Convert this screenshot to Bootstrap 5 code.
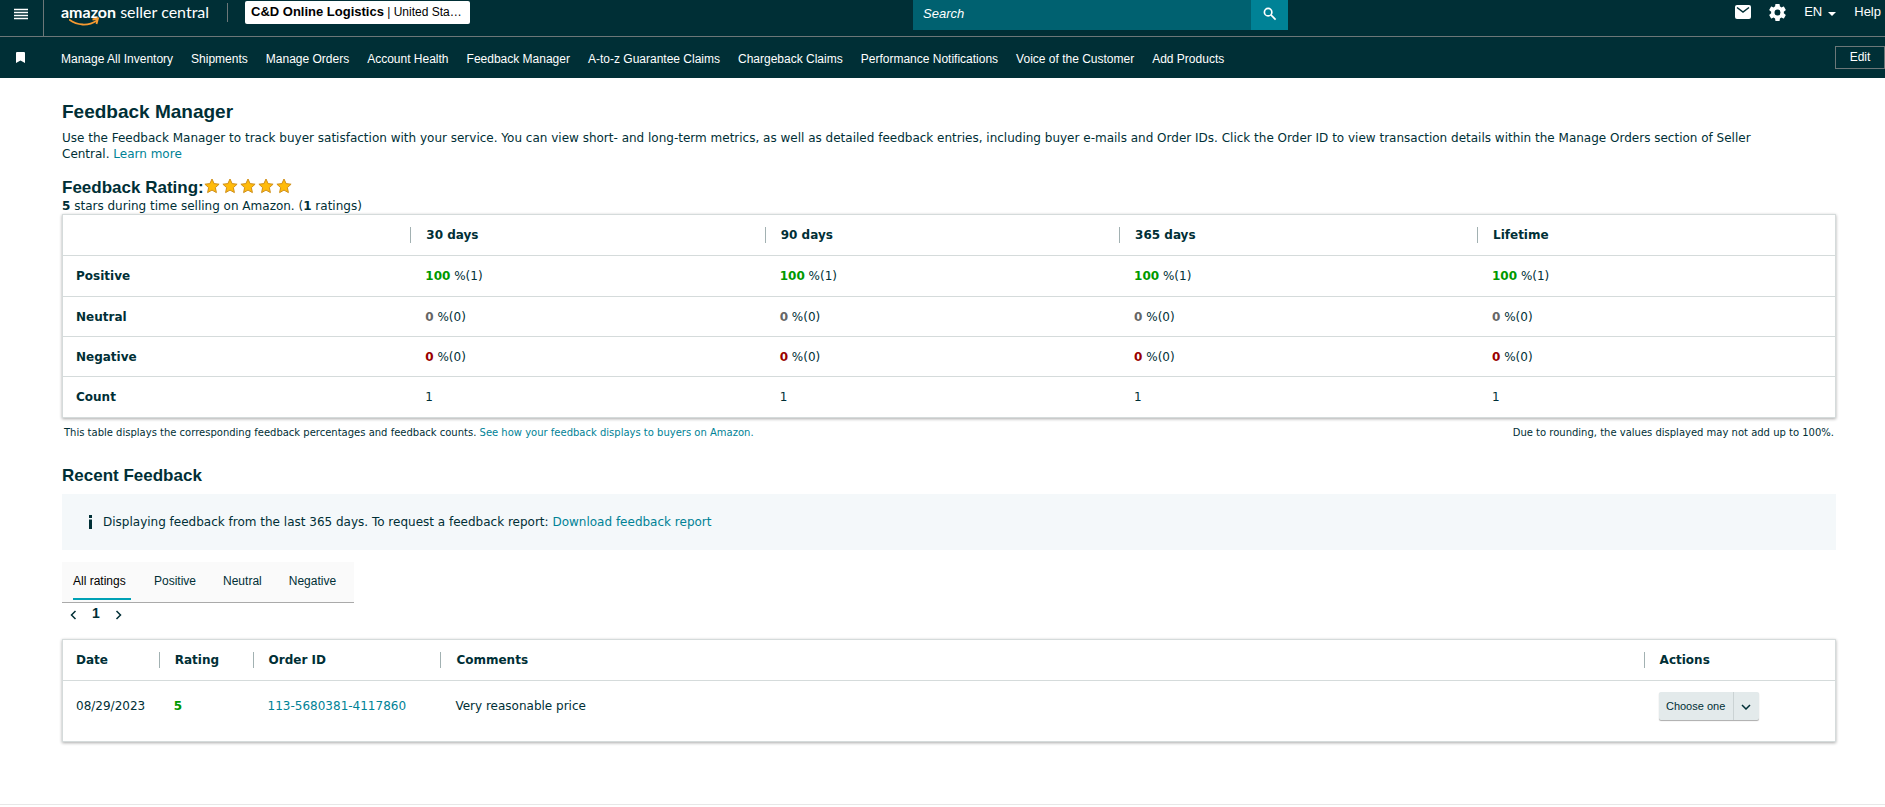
<!DOCTYPE html>
<html lang="en">
<head>
<meta charset="utf-8">
<meta name="viewport" content="width=device-width, initial-scale=1">
<title>Feedback Manager</title>
<link rel="stylesheet" href="https://cdn.jsdelivr.net/npm/bootstrap@5.3.0/dist/css/bootstrap.min.css">
<style>
:root { --ink: #002f36; --teal: #008296; --line: #d5dbdb; --bar-line: #6c7778; }
body { font: 12px/16px "DejaVu Sans", Verdana, sans-serif; color: var(--ink); background: #fff; }
a { color: var(--teal); text-decoration: none; }
a:hover { text-decoration: underline; }
.ui { font-family: "Liberation Sans", Arial, sans-serif; }
.site-head { background: var(--ink); color: #fff; }
.site-head a { color: #fff; }
.top-bar { height: 37px; border-bottom: 1px solid var(--bar-line); }
.menu-cell { width: 44px; height: 36px; padding: 0 8px 10px 6px; border: 0; border-right: 1px solid var(--bar-line); background: none; }
.top-items { height: 28px; }
.brand { position: relative; width: 149px; margin-left: 17px; font: 16px/20px Lato, "Liberation Sans", sans-serif; white-space: nowrap; }
.brand-smile { position: absolute; left: 8px; top: 15px; }
.divider { width: 1px; height: 19px; margin: 0 17px; background: var(--bar-line); }
.picker { width: 225px; height: 23px; padding: 0 6px; border: 0; border-radius: 2px; background: #fff; color: #000; font-size: 12px; text-align: left; }
.picker b { font-size: 13px; }
.finder { width: 375px; height: 30px; }
.finder input { min-width: 0; padding: 0 10px 3px; border: 0; background: #006170; color: #fff; font: italic 13px/16px "Liberation Sans", Arial, sans-serif; }
.finder input::placeholder { color: #fff; opacity: 1; }
.finder button { width: 37px; padding: 0 0 4px; border: 0; background: #008296; }
.tools { gap: 18px; font-size: 13px; padding-right: 4px; }
.caret-gap { gap: 6px; }
.link-bar { height: 41px; font-size: 12px; }
.mark-cell { width: 44px; }
.links { gap: 18px; padding: 2px 0 0 17px; }
.edit-btn { width: 50px; height: 23px; padding: 0 0 2px; border: 1px solid var(--bar-line); background: none; color: #fff; font-size: 12px; }
.page { padding: 22px 49px 62px 62px; border-bottom: 1px solid #e7e7e7; }
h1, h2 { margin: 0; font-weight: 700; font-size: 17px; line-height: 20px; }
h1 { font-size: 19px; line-height: 24px; margin-bottom: 6px; }
.intro { padding-right: 48px; }
.stars { gap: 2px; padding-bottom: 4px; }
.grid { margin: 0; border: 1px solid var(--line); box-shadow: 0 1px 3px #00000055; table-layout: fixed; width: 100%; border-collapse: separate; border-spacing: 0; }
.grid th, .grid td { padding: 0 15px; height: 40px; border-bottom: 1px solid var(--line); vertical-align: middle; }
.grid th:first-child, .grid td:first-child { padding: 0 13px; }
.grid tbody tr:last-child > * { border-bottom: 0; }
.grid thead th + th { padding-left: 0; }
.grid thead th + th span { display: block; border-left: 1px solid #a2b1b2; padding-left: 15px; }
.grid .tall > * { height: 41px; }
.good { color: #090; } .flat { color: #666; } .bad { color: #900; }
.notes { padding: 9px 2px 3px; font-size: 10px; line-height: 12px; }
.info { height: 56px; padding: 0 26px; background: #f4f8fa; margin: 8px 0 12px; gap: 11px; }
.tabs { width: 292px; height: 41px; padding: 0 11px; background: #fafafa; border-bottom: 1px solid #aaa; gap: 27px; font-size: 12px; }
.tabs button { height: 38px; padding: 2px 0 0; border: 0; border-bottom: 2px solid transparent; background: none; color: var(--ink); }
.tabs button.on { width: 58px; margin-right: -4px; border-color: #00a1b5; color: #000; text-align: left; }
.pager { height: 20px; padding-left: 8px; gap: 15px; font-size: 14px; font-weight: 700; margin-bottom: 16px; }
.pager button { padding: 3px 0 0; border: 0; background: none; }
.grid.entries tbody td { height: 60px; padding-bottom: 10px; }
.split { width: 100px; height: 28px; background: #e3eaeb; border-radius: 2px; box-shadow: 0 1px 1px #00000055; }
.split button { border: 0; background: none; padding: 0; font-size: 11px; color: var(--ink); }
.split .drop { width: 26px; border-left: 1px solid #cbd3d4; }
</style>
</head>
<body>
<header class="site-head ui">
  <div class="top-bar d-flex">
    <button class="menu-cell flex-shrink-0" aria-label="Menu"><svg width="14" height="12" viewBox="0 0 14 12" fill="none" stroke="#fff" stroke-width="1.300"><path d="M0 1.500h14M0 4.500h14M0 7.500h14M0 10.500h14"/></svg></button>
    <div class="top-items d-flex flex-grow-1 justify-content-between">
      <div class="d-flex align-items-center pb-1">
        <a class="brand" href="#"><b>amazon</b> seller central
          <svg class="brand-smile" width="32" height="10" viewBox="0 0 32 10" fill="none" stroke="#f79a31" stroke-width="1.800"><path d="M0 2.500c8 6 19 7 28 1M23.500 2.500l5.500-1-1.500 5.500" /></svg></a>
        <span class="divider"></span>
        <button class="picker text-truncate"><b>C&amp;D Online Logistics</b> | United Sta…</button>
      </div>
      <form class="finder d-flex me-1">
        <input class="flex-grow-1" type="text" placeholder="Search" aria-label="Search">
        <button type="button" aria-label="Search"><svg width="14" height="14" viewBox="0 0 15 15" fill="none" stroke="#fff" stroke-width="1.800"><circle cx="5.500" cy="5.500" r="4"/><path d="M8.500 8.500l5 5"/></svg></button>
      </form>
      <div class="tools d-flex align-items-center pb-1">
        <a href="#" class="d-flex" aria-label="Mail"><svg width="16" height="14" viewBox="0 0 16 14"><rect width="16" height="14" rx="2" fill="#fff"/><path d="M2 2.500l6 4.500 6-4.500" fill="none" stroke="#002f36" stroke-width="1.500"/></svg></a>
        <a href="#" class="d-flex" aria-label="Settings"><svg width="17" height="17" viewBox="2 2 20 20" fill="#fff"><path d="M19.430 12.980c.04-.32.070-.64.070-.98s-.03-.66-.07-.98l2.110-1.650c.19-.15.240-.42.120-.64l-2-3.460c-.12-.22-.39-.3-.61-.22l-2.490 1c-.52-.4-1.080-.73-1.690-.98l-.38-2.650A.49.49 0 0 0 14 2h-4c-.25 0-.46.18-.49.420l-.38 2.650c-.61.250-1.170.59-1.690.98l-2.490-1c-.23-.09-.49 0-.61.220l-2 3.460c-.13.220-.07.490.12.640l2.110 1.650c-.04.320-.07.650-.07.980s.03.660.070.980l-2.110 1.650c-.19.150-.24.420-.12.640l2 3.460c.12.220.39.300.61.220l2.490-1c.52.400 1.080.730 1.690.980l.38 2.650c.03.240.240.420.490.420h4c.25 0 .46-.18.490-.42l.38-2.650c.61-.25 1.170-.59 1.690-.98l2.490 1c.23.090.490 0 .61-.22l2-3.460c.12-.22.070-.49-.12-.64zM12 15.500a3.500 3.500 0 1 1 0-7 3.500 3.500 0 0 1 0 7z"/></svg></a>
        <a href="#" class="caret-gap d-flex align-items-center"><span>EN</span><svg class="mt-1" width="8" height="4" viewBox="0 0 8 4"><path d="M0 0h8L4 4z" fill="#fff"/></svg></a>
        <a href="#">Help</a>
      </div>
    </div>
  </div>
  <div class="link-bar d-flex align-items-center">
    <span class="mark-cell d-flex justify-content-center pe-1"><svg width="9" height="11" viewBox="0 0 9 11"><path d="M1 0h7q1 0 1 1v10L4.500 8.500 0 11V1q0-1 1-1z" fill="#fff"/></svg></span>
    <nav class="links d-flex flex-grow-1 text-nowrap">
      <a href="#">Manage All Inventory</a><a href="#">Shipments</a><a href="#">Manage Orders</a><a href="#">Account Health</a><a href="#">Feedback Manager</a><a href="#">A-to-z Guarantee Claims</a><a href="#">Chargeback Claims</a><a href="#">Performance Notifications</a><a href="#">Voice of the Customer</a><a href="#">Add Products</a>
    </nav>
    <button class="edit-btn">Edit</button>
  </div>
</header>
<main class="page">
  <h1 class="ui">Feedback Manager</h1>
  <p class="intro mb-3">Use the Feedback Manager to track buyer satisfaction with your service. You can view short- and long-term metrics, as well as detailed feedback entries, including buyer e-mails and Order IDs. Click the Order ID to view transaction details within the Manage Orders section of Seller Central. <a href="#">Learn more</a></p>
  <div class="d-flex align-items-center">
    <h2 class="ui">Feedback Rating:</h2>
    <span class="stars d-flex" role="img" aria-label="5 stars">
      <svg class="d-none"><defs><path id="star" d="M8 1l2.100 4.600 5 .6-3.700 3.400 1 5L8 12.100l-4.400 2.500 1-5L.9 6.200l5-.6z" stroke="#cf8f1a" stroke-linejoin="round"/></defs></svg>
      <svg width="16" height="16" fill="#ffbb0a"><use href="#star"/></svg>
      <svg width="16" height="16" fill="#ffbb0a"><use href="#star"/></svg>
      <svg width="16" height="16" fill="#ffbb0a"><use href="#star"/></svg>
      <svg width="16" height="16" fill="#ffbb0a"><use href="#star"/></svg>
      <svg width="16" height="16" fill="#ffbb0a"><use href="#star"/></svg>
    </span>
  </div>
  <p class="mb-0"><b>5</b> stars during time selling on Amazon. (<b>1</b> ratings)</p>
  <table class="grid mt-1px">
    <colgroup><col style="width:19.6%"><col style="width:20%"><col style="width:20%"><col style="width:20.2%"><col></colgroup>
    <thead><tr class="tall"><th></th><th><span>30 days</span></th><th><span>90 days</span></th><th><span>365 days</span></th><th><span>Lifetime</span></th></tr></thead>
    <tbody>
      <tr class="tall"><th>Positive</th><td><b class="good">100</b> %(1)</td><td><b class="good">100</b> %(1)</td><td><b class="good">100</b> %(1)</td><td><b class="good">100</b> %(1)</td></tr>
      <tr><th>Neutral</th><td><b class="flat">0</b> %(0)</td><td><b class="flat">0</b> %(0)</td><td><b class="flat">0</b> %(0)</td><td><b class="flat">0</b> %(0)</td></tr>
      <tr><th>Negative</th><td><b class="bad">0</b> %(0)</td><td><b class="bad">0</b> %(0)</td><td><b class="bad">0</b> %(0)</td><td><b class="bad">0</b> %(0)</td></tr>
      <tr><th>Count</th><td>1</td><td>1</td><td>1</td><td>1</td></tr>
    </tbody>
  </table>
  <div class="notes d-flex justify-content-between">
    <span>This table displays the corresponding feedback percentages and feedback counts. <a href="#">See how your feedback displays to buyers on Amazon.</a></span>
    <span>Due to rounding, the values displayed may not add up to 100%.</span>
  </div>
  <h2 class="ui mt-4">Recent Feedback</h2>
  <div class="info d-flex align-items-center">
    <svg width="4" height="14" viewBox="0 0 4 14" fill="#002f36"><rect x="1" width="3" height="3"/><path d="M1 4.500h3V14H1z"/></svg>
    <span>Displaying feedback from the last 365 days. To request a feedback report: <a href="#">Download feedback report</a></span>
  </div>
  <div class="tabs ui d-flex" role="tablist">
    <button class="on" role="tab" aria-selected="true">All ratings</button><button role="tab">Positive</button><button role="tab">Neutral</button><button role="tab">Negative</button>
  </div>
  <div class="pager ui d-flex align-items-center">
    <button aria-label="Previous page"><svg class="d-block" width="7" height="10" viewBox="0 0 7 10" fill="none" stroke="#002f36" stroke-width="1.500"><path d="M5.500 1l-4 4 4 4"/></svg></button>
    <span>1</span>
    <button aria-label="Next page"><svg class="d-block" width="7" height="10" viewBox="0 0 7 10" fill="none" stroke="#002f36" stroke-width="1.500"><path d="M1.500 1l4 4-4 4"/></svg></button>
  </div>
  <table class="grid entries">
    <colgroup><col style="width:5.4%"><col style="width:5.3%"><col style="width:10.6%"><col style="width:67.900%"><col></colgroup>
    <thead><tr class="tall"><th>Date</th><th><span>Rating</span></th><th><span>Order ID</span></th><th><span>Comments</span></th><th><span>Actions</span></th></tr></thead>
    <tbody><tr><td class="text-nowrap">08/29/2023</td><td><b class="good">5</b></td><td><a href="#">113-5680381-4117860</a></td><td>Very reasonable price</td>
      <td><div class="split ui d-flex"><button class="flex-grow-1">Choose one</button><button class="drop" aria-label="More actions"><svg width="10" height="6" viewBox="0 0 10 6" fill="none" stroke="#002f36" stroke-width="1.500"><path d="M1 1l4 4 4-4"/></svg></button></div></td></tr></tbody>
  </table>
</main>
<script src="https://cdn.jsdelivr.net/npm/bootstrap@5.3.0/dist/js/bootstrap.bundle.min.js"></script>
</body>
</html>
